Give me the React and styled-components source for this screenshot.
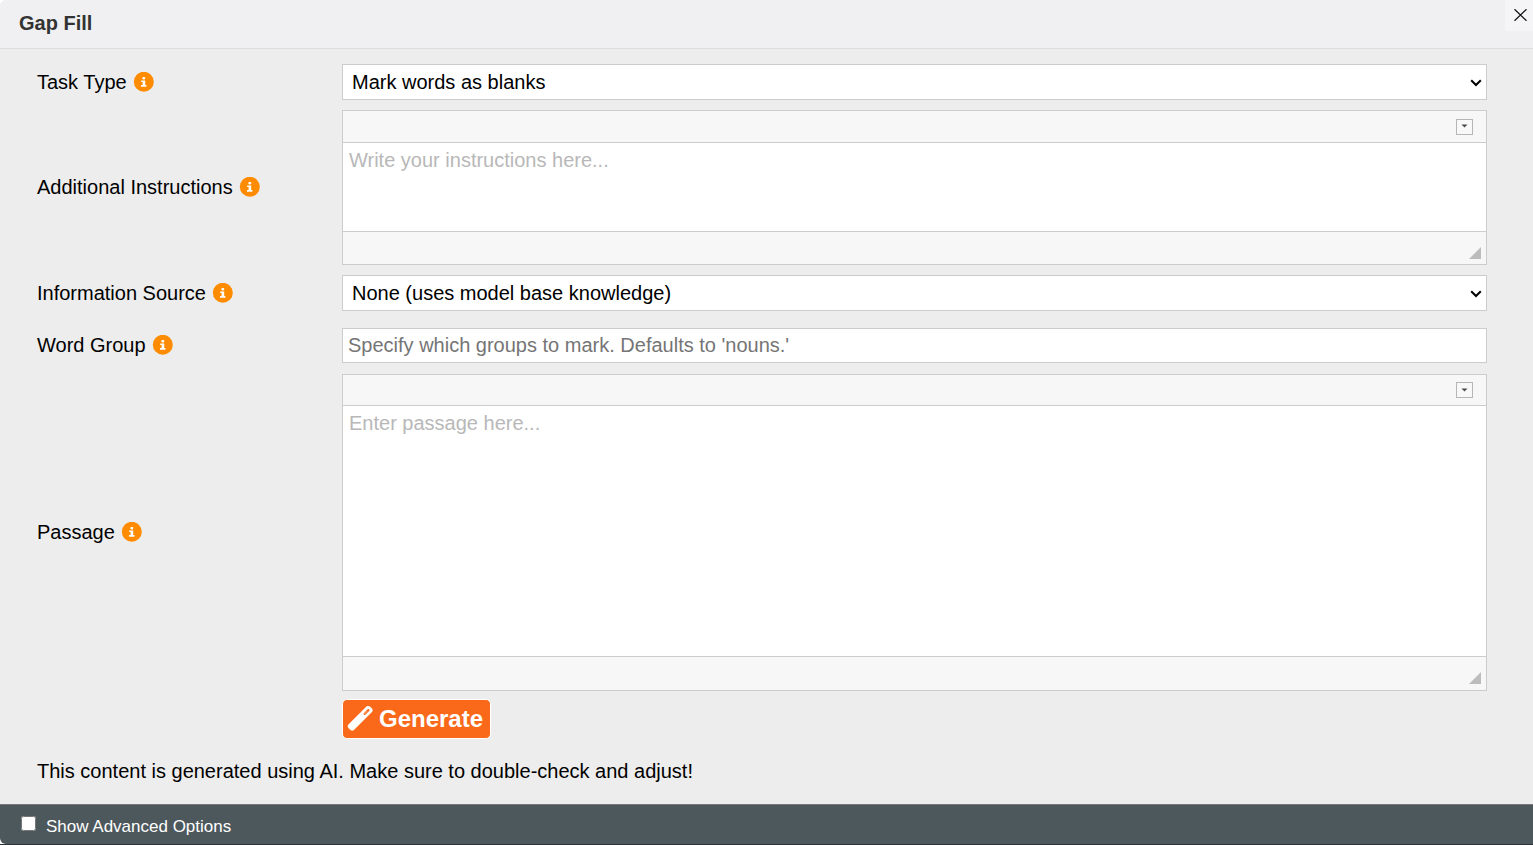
import React from "react";
import styled, { createGlobalStyle } from "styled-components";

const GlobalStyle = createGlobalStyle`
  *, *::before, *::after { box-sizing: border-box; }
  body {
    margin: 0;
    background: #fff;
    color: #000;
    font-family: "Liberation Sans", Arial, sans-serif;
    font-size: 20px;
    line-height: 24px;
  }
`;

const Page = styled.div`
  min-height: 100vh;
  display: flex;
  flex-direction: column;
  border-bottom: 1px solid #2c3235;
`;

const Dialog = styled.section`
  flex: 1;
  display: flex;
  flex-direction: column;
  background: #ededed;
  border-radius: 6px 0 0 6px;
  overflow: hidden;
`;

const Header = styled.header`
  display: flex;
  justify-content: space-between;
  height: 49px;
  padding-left: 19px;
  background: #f0f0f2;
  border-bottom: 1px solid #dedede;
`;

const Title = styled.h1`
  margin: 0;
  padding-top: 11px;
  color: #333;
  font-size: 20px;
  line-height: 24px;
`;

const CloseButton = styled.button`
  display: flex;
  align-items: center;
  justify-content: center;
  width: 28px;
  height: 31px;
  padding: 0 0 1px 3px;
  border: 0;
  background: #f5f5f7;
  color: #111;
`;

const Form = styled.form`
  flex: 1;
  display: flex;
  flex-direction: column;
  padding: 15px 46px 20px 37px;
`;

const Row = styled.div`
  display: grid;
  grid-template-columns: 305px 1fr;
  align-items: center;
  margin-bottom: ${(p) => p.$gap || 10}px;
`;

const LabelCell = styled.div`
  display: flex;
  align-items: center;
  gap: 6px;
  padding-bottom: 1px;
`;

const SelectBox = styled.div`
  position: relative;

  svg {
    position: absolute;
    top: 15px;
    right: 5px;
    pointer-events: none;
  }
`;

const Select = styled.select`
  appearance: none;
  display: block;
  width: 100%;
  height: 36px;
  padding: 0 24px 0 9px;
  border: 1px solid #ccc;
  border-radius: 0;
  background: #fff;
  color: #000;
  font: inherit;
`;

const TextInput = styled.input`
  width: 100%;
  height: 35px;
  padding: 0 5px;
  border: 1px solid #ccc;
  background: #fff;
  font: inherit;
  &::placeholder { color: #757575; }
`;

const Editor = styled.div`
  border: 1px solid #ccc;
  background: #f7f7f7;
`;

const Toolbar = styled.div`
  display: flex;
  align-items: center;
  justify-content: flex-end;
  height: ${(p) => p.$height}px;
  padding-right: 13px;
`;

const CollapseButton = styled.button`
  display: flex;
  align-items: center;
  justify-content: center;
  width: 17px;
  height: 16px;
  padding: 0 0 1px;
  border: 1px solid #b6b6b6;
  background: #f8f8f8;
  color: #484848;
`;

const EditorText = styled.textarea`
  display: block;
  width: 100%;
  height: ${(p) => p.$height}px;
  padding: 5px 6px;
  border: solid #ccc;
  border-width: 1px 0;
  background: #fff;
  font: inherit;
  resize: none;
  &::placeholder { color: #b8b8b8; }
`;

const StatusBar = styled.div`
  display: flex;
  align-items: flex-start;
  justify-content: flex-end;
  height: ${(p) => p.$height}px;
  padding: 15px 5px 0 0;
`;

const GenerateButton = styled.button`
  display: flex;
  align-items: center;
  align-self: flex-start;
  gap: 6px;
  height: 40px;
  margin: 0 0 20px 305px;
  padding: 0 7px 0 4px;
  border: 1px solid #fff;
  border-radius: 5px;
  background: #fa6919;
  color: #fff;
  font: inherit;
  font-size: 24px;
  font-weight: 700;
`;

const Note = styled.p`
  margin: 0;
`;

const Footer = styled.footer`
  display: flex;
  height: 40px;
  padding-left: 21px;
  border-top: 1px solid #74777a;
  background: #4d585d;
  color: #fff;
  font-size: 17px;
`;

const AdvancedLabel = styled.label`
  display: flex;
  align-items: flex-start;
  gap: 10px;
  padding-top: 10px;
`;

const Checkbox = styled.input`
  width: 15px;
  height: 15px;
  margin: 1px 0 0;
`;

function InfoIcon() {
  return (
    <svg width="21" height="20" viewBox="0 0 21 20" aria-hidden="true">
      <circle cx="10.8" cy="9.8" r="10" fill="#ff8c00" />
      <rect x="9.4" y="5" width="2.8" height="2.4" rx="0.8" fill="#fff" />
      <path d="M8.2 8.4h4v4.7h1.2v1.6H8v-1.6h1.6V10H8.2z" fill="#fff" />
    </svg>
  );
}

function SelectField({ id, option }) {
  return (
    <SelectBox>
      <Select id={id}>
        <option>{option}</option>
      </Select>
      <svg width="12" height="8" viewBox="0 0 12 8" aria-hidden="true">
        <path d="M1.2 1.2L6 6L10.8 1.2" fill="none" stroke="#000" strokeWidth="2" />
      </svg>
    </SelectBox>
  );
}

function Field({ id, label, gap, children }) {
  return (
    <Row $gap={gap}>
      <LabelCell>
        <label htmlFor={id}>{label}</label>
        <InfoIcon />
      </LabelCell>
      {children}
    </Row>
  );
}

function RichEditor({ id, top = 31, height, bottom = 32, placeholder }) {
  return (
    <Editor>
      <Toolbar $height={top}>
        <CollapseButton type="button" aria-label="Expand toolbar">
          <svg width="7" height="4" viewBox="0 0 7 4" aria-hidden="true">
            <path d="M0.5 0.5h6L3.5 3.5z" fill="currentColor" />
          </svg>
        </CollapseButton>
      </Toolbar>
      <EditorText id={id} $height={height} placeholder={placeholder} />
      <StatusBar $height={bottom}>
        <svg width="12" height="12" viewBox="0 0 12 12" aria-hidden="true">
          <path d="M12 0v12H0z" fill="#bcbcbc" />
        </svg>
      </StatusBar>
    </Editor>
  );
}

export default function App() {
  return (
    <Page>
      <GlobalStyle />
      <Dialog>
        <Header>
          <Title>Gap Fill</Title>
          <CloseButton type="button" aria-label="Close">
            <svg width="13" height="12" viewBox="0 0 13 12" aria-hidden="true">
              <path d="M0.5 0.2l12 11.6M12.5 0.2l-12 11.6" stroke="currentColor" strokeWidth="1.2" />
            </svg>
          </CloseButton>
        </Header>
        <Form onSubmit={(e) => e.preventDefault()}>
          <Field id="task-type" label="Task Type">
            <SelectField id="task-type" option="Mark words as blanks" />
          </Field>
          <Field id="instructions" label="Additional Instructions">
            <RichEditor id="instructions" height={90} placeholder="Write your instructions here..." />
          </Field>
          <Field id="source" label="Information Source" gap={17}>
            <SelectField id="source" option="None (uses model base knowledge)" />
          </Field>
          <Field id="word-group" label="Word Group" gap={11}>
            <TextInput id="word-group" type="text" placeholder="Specify which groups to mark. Defaults to 'nouns.'" />
          </Field>
          <Field id="passage" label="Passage" gap={8}>
            <RichEditor id="passage" top={30} height={252} bottom={33} placeholder="Enter passage here..." />
          </Field>
          <GenerateButton type="submit">
            <svg width="26" height="26" viewBox="0 0 26 26" aria-hidden="true">
              <g transform="rotate(-45 13.2 12.3)">
                <rect x="-2" y="8.4" width="30.4" height="7.8" rx="2.8" fill="#fff" />
                <rect x="18.4" y="11.2" width="7.4" height="2.2" rx="1" fill="#fa6919" />
                <rect x="19.4" y="12" width="4" height="0.6" fill="#fff" opacity="0.5" />
              </g>
            </svg>
            Generate
          </GenerateButton>
          <Note>This content is generated using AI. Make sure to double-check and adjust!</Note>
        </Form>
        <Footer>
          <AdvancedLabel>
            <Checkbox type="checkbox" />
            Show Advanced Options
          </AdvancedLabel>
        </Footer>
      </Dialog>
    </Page>
  );
}
